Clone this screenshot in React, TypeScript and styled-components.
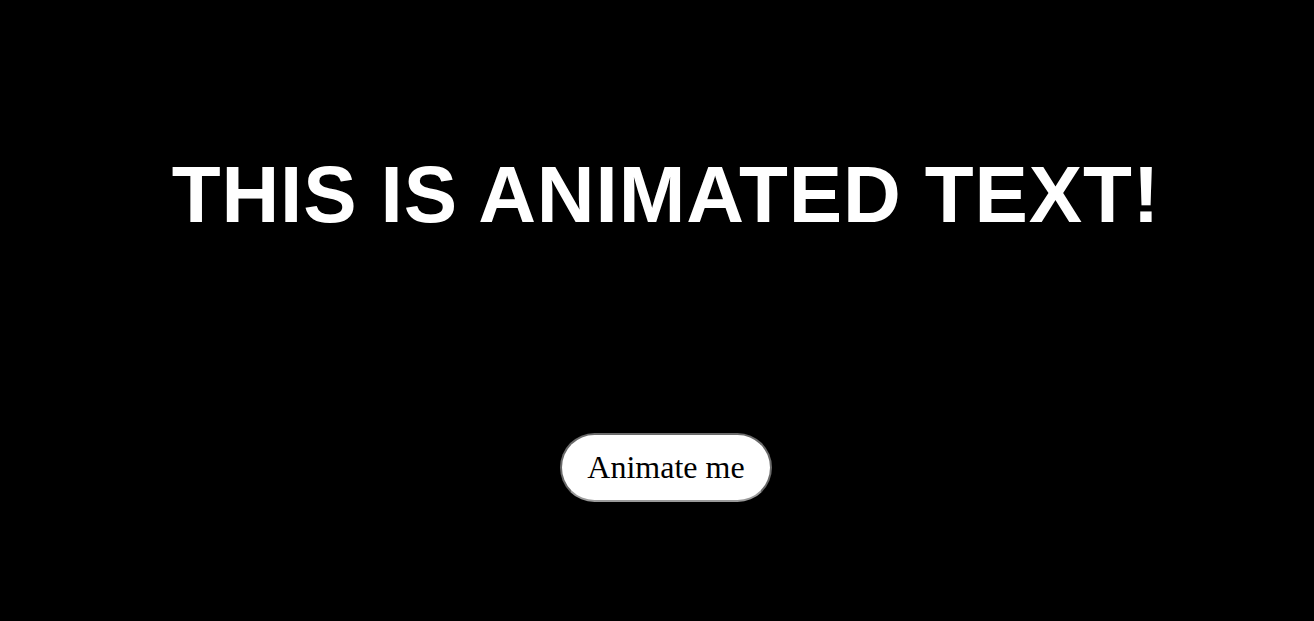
import React from "react";
import styled, { createGlobalStyle } from "styled-components";

const GlobalStyle = createGlobalStyle`
  html, body {
    background: #000000;
  }
  body {
    margin: 8px;
    overflow: hidden;
  }
`;

const Stage = styled.main`
  width: calc(100vw + 2px);
  display: flex;
  flex-direction: column;
  align-items: center;
  padding-top: 141px;
  gap: 192px;
`;

const Title = styled.h1`
  margin: 0;
  font-family: "Liberation Sans", Arial, sans-serif;
  font-weight: 700;
  font-size: 80px;
  line-height: normal;
  color: #ffffff;
  text-transform: uppercase;
  letter-spacing: 0.9px;
  white-space: nowrap;
`;

const AnimateButton = styled.button`
  font-family: "Liberation Serif", "Times New Roman", serif;
  font-size: 32px;
  line-height: normal;
  color: #000000;
  background: #ffffff;
  border: 2px solid #6a6a6a;
  border-bottom-color: #9a9a9a;
  border-radius: 999px;
  padding: 14px 25px;
  cursor: pointer;
`;

export default function App() {
  return (
    <>
      <GlobalStyle />
      <Stage>
        <Title>This is animated text!</Title>
        <AnimateButton>Animate me</AnimateButton>
      </Stage>
    </>
  );
}
